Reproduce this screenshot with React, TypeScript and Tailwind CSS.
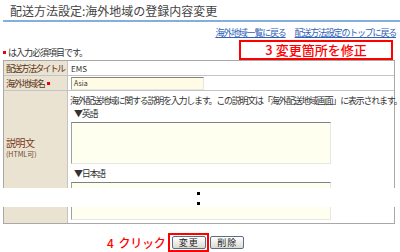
import React from 'react';

const jp = "font-['MS_PGothic','Noto_Sans_CJK_JP',sans-serif]";

const Field: React.FC<{ className?: string }> = ({ className }) => (
    <div className={`bg-[#fffff0] border border-t-[#808080] border-l-[#a0a0a0] border-r-[#e6e6e6] border-b-[#e6e6e6] ${className ?? ''}`} />
);

const XpButton: React.FC<{ label: string }> = ({ label }) => (
    <button className="w-[34px] h-[13px] shrink-0 rounded-[2px] border border-[#5a6e8c] bg-gradient-to-b from-white to-[#dcdad0] text-[9px] leading-[11px] tracking-[1px] text-[#222]">
        {label}
    </button>
);

const App: React.FC = () => {
    return (
        <div className={`relative w-[400px] h-[252px] overflow-hidden bg-white text-[#333] leading-none ${jp}`}>
            <div className="ml-[3px] h-[22px] border-b-2 border-[#84aedc] pl-[7px] pt-[4px] text-[12px] leading-[14px] text-[#444]">
                配送方法設定:海外地域の登録内容変更
            </div>

            <div className="mt-[5px] flex justify-end gap-[9px] pr-[4px] text-[9px] leading-[11px] tracking-[-1.2px] text-[#2f5fb8]">
                <a className="underline">海外地域一覧に戻る</a>
                <a className="underline">配送方法設定のトップに戻る</a>
            </div>

            <div className="mt-[2px] flex items-end justify-between pr-[7px]">
                <p className="flex items-center pl-[3px] pb-[2px] text-[9px] leading-[11px] tracking-[-1px]">
                    <span className="w-[3px] h-[3px] bg-[#e00] mr-[2px]" />は入力必須項目です。
                </p>
                <div className="w-[154px] h-[20px] border-2 border-[#ff0000] flex items-center justify-center text-[13px] leading-[16px] font-medium text-[#ff0000]">
                    3 変更箇所を修正
                </div>
            </div>

            <div className="mx-[3px] w-[392px] border border-[#a8a8a8] text-[9px] leading-[11px] tracking-[-1.3px]">
                <div className="flex h-[15px] border-b border-[#c4c4c4]">
                    <div className="w-[64px] shrink-0 bg-[#ebe3d1] border-r border-[#c4c4c4] pl-[2px] flex items-center whitespace-nowrap tracking-[-1.7px] text-[#5a3418]">配送方法タイトル</div>
                    <div className="flex items-center pl-[3px] tracking-[0px] text-[8px]">EMS</div>
                </div>
                <div className="flex h-[15px] border-b border-[#c4c4c4]">
                    <div className="w-[64px] shrink-0 bg-[#ebe3d1] border-r border-[#c4c4c4] pl-[2px] flex items-center whitespace-nowrap text-[#5a3418]">
                        海外地域名<span className="ml-[2px] w-[3px] h-[3px] bg-[#e00]" />
                    </div>
                    <div className="flex items-center pl-[3px]">
                        <div className="w-[133px] h-[13px] bg-[#fffbe4] border border-t-[#808080] border-l-[#a0a0a0] border-r-[#e6e6e6] border-b-[#e6e6e6] pl-[2px] text-[7px] leading-[11px] tracking-[0px]">Asia</div>
                    </div>
                </div>
                <div className="flex h-[132px]">
                    <div className="w-[64px] shrink-0 bg-[#ebe3d1] border-r border-[#c4c4c4] pl-[2px] flex flex-col justify-center pb-[18px] text-[#7a3a1c]">
                        <span className="text-[10px] leading-[12px] tracking-[-0.5px]">説明文</span>
                        <span className="text-[7px] leading-[10px] tracking-[0px] text-[#6b4a30]">(HTML可)</span>
                    </div>
                    <div className="flex flex-col pl-[3px] pt-[4px]">
                        <p className="-ml-[1px] text-[9px] leading-[11px] tracking-[-1.25px] whitespace-nowrap">
                            海外配送地域に関する説明を入力します。この説明文は「海外配送地域画面」に表示されます。
                        </p>
                        <p className="mt-[2px] pl-[3px]">▼英語</p>
                        <Field className="mt-[3px] w-[260px] h-[42px]" />
                        <p className="mt-[4px] pl-[3px]">▼日本語</p>
                        <Field className="mt-[3px] w-[260px] h-[38px]" />
                    </div>
                </div>
            </div>

            <div className="mt-[9px] flex items-center pl-[107px]">
                <span className="mr-[3px] flex gap-[5px] text-[12px] leading-[14px] font-medium tracking-[-0.3px] text-[#ff0000]">
                    <span>4</span>
                    <span>クリック</span>
                </span>
                <div className="w-[41px] h-[19px] shrink-0 border-2 border-[#ff0000] flex items-center justify-center">
                    <XpButton label="変更" />
                </div>
                <div className="ml-[1px] flex items-center">
                    <XpButton label="削除" />
                </div>
            </div>

            {/* cut mark over the long form */}
            <div className="absolute left-0 right-0 top-[188px] h-[19px] bg-white">
                <span className="absolute left-[197px] top-[4px] w-[3px] h-[3px] bg-black" />
                <span className="absolute left-[197px] top-[14px] w-[3px] h-[3px] bg-black" />
            </div>
        </div>
    );
};

export default App;
